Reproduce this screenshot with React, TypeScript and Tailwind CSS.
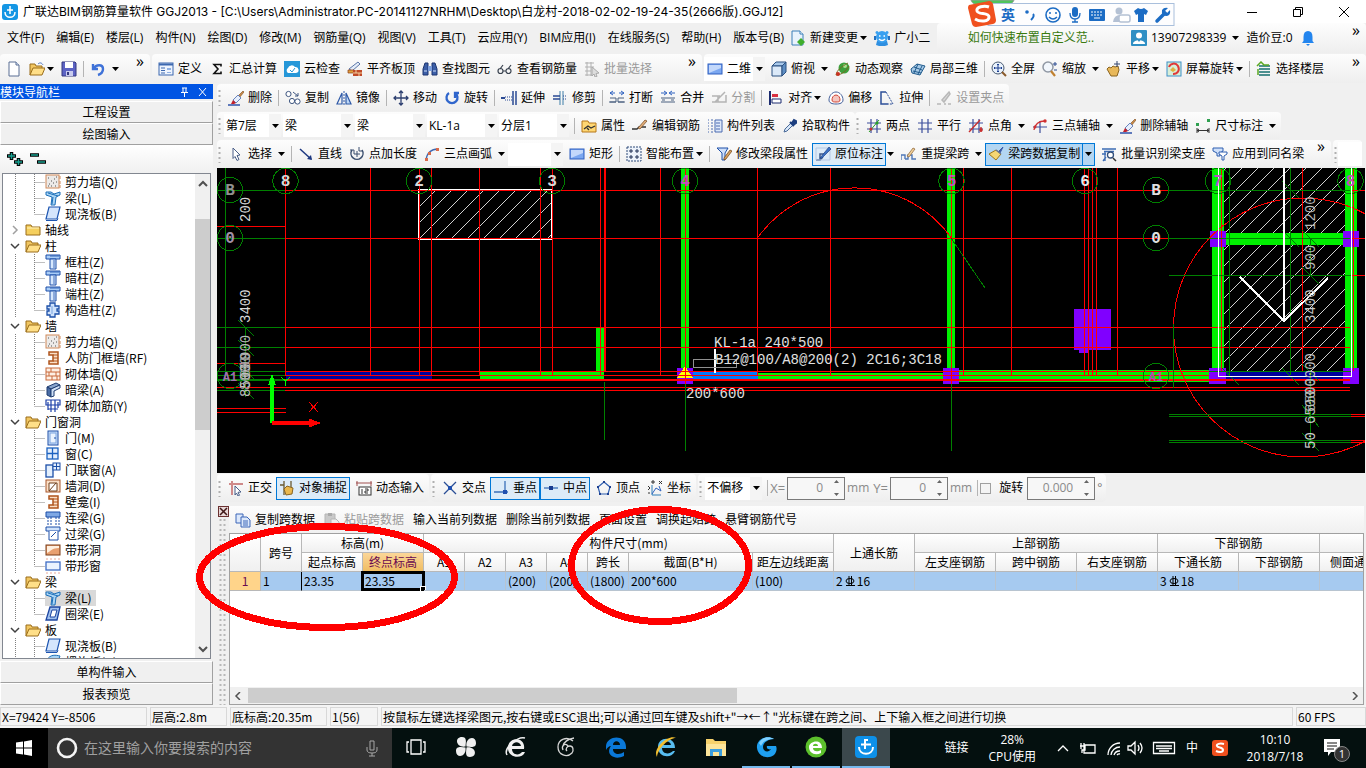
import React from 'react';

// ---------- icon drawings, all on a 16x16 grid ----------

const blueRect = (
  <>
    <rect x="1" y="3" width="14" height="10" fill="#7ba7f0" stroke="#2f5fc0" />
    <path d="M2 4h12v3l-12 5z" fill="#c3d8fb" />
  </>
);
const broom = (
  <>
    <path d="M15 1L10 6l1.500 1.500L16 2z" fill="#c98b4a" stroke="#7a4a1c" strokeWidth=".6" />
    <path d="M10 5l3 3-5 5-3-3z" fill="#e6eefc" stroke="#4668b0" strokeWidth=".8" />
    <path d="M5 10l3 3-2 1H3z" fill="#c2202a" />
    <path d="M0 15h12" stroke="#2c50a8" strokeWidth="1.500" />
  </>
);
const column = (
  <>
    <path d="M1 1h14v4H1z" fill="#a9cdf7" stroke="#1c4fa8" />
    <path d="M5 5h6v10H5z" fill="#d7e8fd" stroke="#1c4fa8" />
    <path d="M5 2h9M9 6v8" stroke="#1c4fa8" strokeWidth=".8" />
  </>
);
const niche = (
  <>
    <path d="M4 2h9v12H4v-3h4V5H4z" fill="#fbe0c8" stroke="#b0541c" strokeWidth="1.500" />
    <path d="M8 5h5M8 8h5M8 11h5" stroke="#b0541c" />
  </>
);
const dottedWall = (
  <>
    <rect x="1" y="1" width="13" height="13" fill="#eceae8" stroke="#d08a5a" />
    <path d="M3 4h1M6 7h1M9 5h1M4 10h1M8 9h1M11 8h1M6 12h1M10 12h1M3 12h1M11 3h1" stroke="#555" />
    <path d="M15 2v3M15 7v3M15 11v3" stroke="#d08a5a" />
  </>
);
const slab = (
  <>
    <path d="M4 1h11l-3 12H1z" fill="#d4e5fc" stroke="#1d55b0" strokeWidth="1.200" />
    <path d="M1 14.500h11l1-2" fill="none" stroke="#1d55b0" />
  </>
);
const beam = (
  <>
    <path d="M1 2h5l3 2 6-2v3l-4 2-1 8H6l1-8-6-2z" fill="#a8d4f5" stroke="#1d6fb8" />
    <path d="M3 3l10 3M8 7l-1 7" stroke="#1d6fb8" />
  </>
);
const axisGrid = <path d="M1 5h14M1 11h14M5 1v14M11 1v14" stroke="#3c4f9c" strokeWidth="1.200" fill="none" />;

const ICONS: Record<string, React.ReactNode> = {
  newFile: (
    <>
      <path d="M3 1h7l3 3v11H3z" fill="#fff" stroke="#5a6f94" />
      <path d="M10 1v3h3" fill="#dbe6f8" stroke="#5a6f94" />
    </>
  ),
  open: (
    <>
      <path d="M1 14V3h5l1 2h6v3" fill="#f1c661" stroke="#9a6d1a" />
      <path d="M1 14L4 7h12l-3 7z" fill="#ffdf88" stroke="#9a6d1a" />
      <path d="M9 3c2-2 4-1 5 1" stroke="#4c77c0" fill="none" />
    </>
  ),
  folderOpen: (
    <>
      <path d="M1 14V3h5l1 2h6v3" fill="#f1c661" stroke="#9a6d1a" />
      <path d="M1 14L4 7h12l-3 7z" fill="#ffdf88" stroke="#9a6d1a" />
    </>
  ),
  folder: (
    <>
      <path d="M1 13V3h5l1 2h8v8z" fill="#f5cf5e" stroke="#9a6d1a" />
      <path d="M2 6h12" stroke="#fff3c0" />
    </>
  ),
  save: (
    <>
      <path d="M1 1h13l1 1v13H1z" fill="#5c63c4" stroke="#34397e" />
      <path d="M4 1h8v6H4z" fill="#fff" />
      <path d="M5 10h7v5H5z" fill="#c8cbee" />
      <path d="M6 11h2v3H6z" fill="#34397e" />
    </>
  ),
  undo: <path d="M3 3v5h5M3.500 8C6 3 13 3 13 8c0 3-2 5-5 6" fill="none" stroke="#3f72d8" strokeWidth="2.400" />,
  define: (
    <>
      <rect x="1" y="2" width="14" height="12" fill="#eef4fd" stroke="#3c68b0" />
      <path d="M1 3.500h14" stroke="#3c68b0" strokeWidth="2" />
      <path d="M3 7h4M3 9.500h4M3 12h4" stroke="#3c68b0" />
      <path d="M9 7h4v2H9zM9 11h4v1H9z" fill="#8fb0e4" />
    </>
  ),
  sigma: <path d="M12 5.500V3.500H5L9 8l-4 4.500h7v-2" fill="none" stroke="#111" strokeWidth="1.600" />,
  cloud: (
    <>
      <rect width="16" height="16" fill="#2697d8" />
      <path d="M4 12a3 3 0 010-5 4 4 0 017-1 3 3 0 011 6z" fill="#fff" />
      <path d="M6 9l2 2 3-4" stroke="#2697d8" fill="none" />
    </>
  ),
  alignTop: (
    <>
      <path d="M2 8l9-7 2 2-8 7z" fill="#e4ecf8" stroke="#5a76a8" />
      <path d="M1 9h6v3H1z" fill="#e0a040" stroke="#8a3a12" strokeWidth=".7" />
      <path d="M6 9h9v6H6z" fill="#c04a28" />
      <path d="M6 12h9M9 9v3M12 12v3" stroke="#f2d0a0" />
    </>
  ),
  binoculars: (
    <>
      <path d="M1 14V8l2-6h3v12zM10 14V2h3l2 6v6z" fill="#3c5fa8" stroke="#1d356e" />
      <path d="M6 5h4v5H6z" fill="#7fa0dc" />
      <path d="M2 10h3M11 10h3" stroke="#cfe0fa" />
    </>
  ),
  glasses: <path d="M3 8l3-4M11 8l3-4M1 10a2.500 2.500 0 105 0 2.500 2.500 0 10-5 0M9 10a2.500 2.500 0 105 0 2.500 2.500 0 10-5 0M6 10h3" fill="none" stroke="#39424f" strokeWidth="1.200" />,
  batch: (
    <>
      <path d="M1 2h9M1 6h9M1 10h6M1 14h7M3 1v14M7 1v14" stroke="#b0b0b0" fill="none" />
      <path d="M8 6l7 6-3 .5 1 3-2 .5-1-3-2 2z" fill="#ddd" stroke="#aaa" />
    </>
  ),
  rect: blueRect,
  cube: (
    <>
      <path d="M1 5l4-4h10l-4 4z" fill="#a8c8ea" stroke="#2a5080" />
      <path d="M1 5h10v10H1z" fill="#dbe9f8" stroke="#2a5080" />
      <path d="M11 5l4-4v10l-4 4z" fill="#5f8fc4" stroke="#2a5080" />
    </>
  ),
  orbit: (
    <>
      <circle cx="9" cy="7" r="5.500" fill="#3ca03c" />
      <circle cx="10" cy="5" r="2" fill="#a8e090" />
      <path d="M1 14c1-5 5-8 12-12M1 14c4 0 9-2 13-9" stroke="#7a6a20" fill="none" />
      <circle cx="3" cy="13" r="2" fill="#c83020" />
    </>
  ),
  local3d: (
    <>
      <path d="M1 8l6-5 8 2-5 9-8-2z" fill="#a9cbe8" stroke="#1f5a8c" />
      <path d="M4 6l8 3M3 10l8 2M8 3L4 12M12 5l-4 8" stroke="#1f5a8c" />
    </>
  ),
  fullscreen: (
    <>
      <circle cx="7" cy="7" r="6" fill="#e9f2fc" stroke="#4a5a70" />
      <path d="M7 3v8M3 7h8M6 4l1-1 1 1M6 10l1 1 1-1M4 6L3 7l1 1M10 6l1 1-1 1" stroke="#1c3e90" fill="none" />
      <path d="M11 11l4 4" stroke="#8a5a2a" strokeWidth="2" />
    </>
  ),
  zoom: (
    <>
      <circle cx="6" cy="6" r="5" fill="#f2f7fd" stroke="#9098a4" strokeWidth="1.500" />
      <path d="M9 10l4 5" stroke="#c08030" strokeWidth="2.200" />
      <path d="M11 3h4M13 1v4M12 9h3" stroke="#2a4a90" />
    </>
  ),
  pan: (
    <>
      <path d="M1 8l2-2 2 1 2-2 2 1 3-1 1 4-2 6H5z" fill="#e8b85a" stroke="#8a6420" />
      <path d="M11 0v6M8 3h6" stroke="#33456e" />
    </>
  ),
  rotateScreen: (
    <>
      <rect x="1" y="1" width="14" height="14" fill="#d8eed8" stroke="#3c90c8" />
      <path d="M3 6a5 5 0 019-1c2 4 0 8-5 8" fill="none" stroke="#e03838" strokeWidth="2" />
      <path d="M4 9l3-3 3 3-3 2z" fill="#e0b040" />
    </>
  ),
  floors: (
    <>
      <path d="M3 5h11M3 8h11M3 11h11M3 14h11" stroke="#167070" strokeWidth="1.500" />
      <path d="M1 5l4-4 3 3h5M2 8v6" stroke="#5aa820" fill="none" strokeWidth="1.500" />
    </>
  ),
  broom,
  copy: (
    <>
      <circle cx="3.500" cy="4" r="2.600" fill="#fff" stroke="#3f5680" />
      <circle cx="7" cy="11" r="2.600" fill="#fff" stroke="#3f5680" />
      <circle cx="12.500" cy="11.500" r="2.600" fill="#fff" stroke="#3f5680" />
      <path d="M8 2l5 4M13 3v3h-3" stroke="#3f5680" fill="none" />
    </>
  ),
  mirror: (
    <>
      <path d="M6 3v11H1z" fill="none" stroke="#2f5aa8" strokeWidth="1.200" />
      <path d="M10 3v11h5z" fill="#bcd6f6" stroke="#2f5aa8" strokeWidth="1.200" />
      <path d="M8 1v14" stroke="#2f5aa8" strokeDasharray="2 1" />
    </>
  ),
  move: <path d="M8 1v14M1 8h14M6 3l2-2 2 2M6 13l2 2 2-2M3 6L1 8l2 2M13 6l2 2-2 2" fill="none" stroke="#2d3f70" strokeWidth="1.300" />,
  rotate: <path d="M5 3a5.500 5.500 0 106 0M11 8V3h4" fill="none" stroke="#3066cc" strokeWidth="2.300" />,
  extend: (
    <>
      <path d="M12 1v14M15 1v14" stroke="#2a4a94" strokeWidth="1.500" />
      <path d="M0 8h4" stroke="#2a4a94" strokeWidth="2" />
      <path d="M4 7h7M4 10h7" stroke="#2a4a94" strokeDasharray="1 1" />
    </>
  ),
  trim: (
    <>
      <path d="M8 1v14M11 1v14" stroke="#3f7fa8" />
      <path d="M1 6h7M1 9h7" stroke="#2a4a94" strokeWidth="1.300" />
      <path d="M11 6h4M11 9h4" stroke="#2a4a94" strokeDasharray="1 1" />
    </>
  ),
  breakIt: (
    <>
      <path d="M1 3h5M10 3h5M4 1l-3 2 3 2M12 1l3 2-3 2" stroke="#2f62c0" fill="none" />
      <path d="M1 8h6v4H1M15 8H9v4h6M0 12h7M9 12h7" stroke="#4a6080" fill="none" />
    </>
  ),
  merge: (
    <>
      <path d="M1 3h5M10 3h5M4 1l3 2-3 2M12 1L9 3l3 2" stroke="#2f62c0" fill="none" />
      <path d="M1 8h14M1 12h14M2 10h3M11 10h3" stroke="#4a6080" fill="none" />
    </>
  ),
  split: <path d="M1 6h8M1 12h14v-7M4 12L14 2M7 6v6" stroke="#b4b4b4" strokeWidth="1.500" fill="none" />,
  align: (
    <>
      <path d="M2 1v14" stroke="#1c2c70" strokeWidth="2" />
      <path d="M4 4h6v3H4z" fill="#d83040" />
      <path d="M4 9h9v4H4z" fill="#fff" stroke="#1c2c70" />
    </>
  ),
  offset: (
    <>
      <path d="M8 2c4 0 7 4 7 8 0 3-3 4-7 4s-7-1-7-4c0-4 3-8 7-8z" fill="#fff" stroke="#44609a" />
      <path d="M8 5c3 0 4 3 4 5s-2 2-4 2-4 0-4-2 1-5 4-5z" fill="#f3c6c0" stroke="#d04434" />
    </>
  ),
  stretch: (
    <>
      <path d="M9 14H2V2h5" fill="none" stroke="#2d4f98" strokeWidth="1.500" />
      <path d="M7 2l7 12H9" fill="none" stroke="#2d4f98" strokeDasharray="2 1" />
    </>
  ),
  grip: <path d="M1 14h4M8 14h2M12 14h3M6 10l7-8 1 2-6 8z" stroke="#b8b8b8" strokeWidth="1.500" fill="#ddd" />,
  props: (
    <>
      <path d="M1 3h6l1 2h7v9H1z" fill="#ffd773" stroke="#b5761a" />
      <path d="M3 11l4-3 3 2 4-2M6 10l2 2" stroke="#333" fill="none" strokeWidth="1.300" />
    </>
  ),
  editBar: (
    <>
      <path d="M0 11h5l2-2h7" stroke="#333" strokeWidth="1.300" fill="none" />
      <path d="M6 10L13 2l2 1-7 8z" fill="#e4b07a" stroke="#70431c" strokeWidth=".7" />
    </>
  ),
  list: (
    <>
      <path d="M1 2h1M1 5h1M1 8h1M1 11h1M1 14h1M4 2h2M4 5h2M4 8h2M4 11h2M4 14h2" stroke="#4a6ab0" />
      <path d="M8 2h7v12H8z" fill="#dfe9fa" stroke="#4a6ab0" />
      <path d="M9 5h4M9 8h4M9 11h4" stroke="#4a6ab0" />
    </>
  ),
  pick: (
    <>
      <path d="M2 14l1-3 6-6 2 2-6 6z" fill="#d8e8fa" stroke="#4a6a98" />
      <path d="M8 4l4 4M10 5l2-3 2 1v2l-3 2z" stroke="#1d3f80" strokeWidth="2" fill="#1d3f80" />
    </>
  ),
  twoPoint: (
    <>
      {axisGrid}
      <path d="M3 14L13 2" stroke="#28a028" />
      <circle cx="5" cy="11" r="1.600" fill="#c03030" />
      <circle cx="11" cy="5" r="1.600" fill="#28a028" />
    </>
  ),
  parallel: axisGrid,
  pointAngle: (
    <>
      {axisGrid}
      <path d="M1 14L12 2M13 9v5" stroke="#c83030" strokeWidth="1.400" />
      <circle cx="13" cy="12" r="1.800" fill="#c83030" />
    </>
  ),
  threeAxis: (
    <>
      <path d="M1 9h14M8 3v12" stroke="#3c4f9c" strokeWidth="1.200" />
      <path d="M2 12C3 6 7 3 13 3" stroke="#d03030" fill="none" strokeWidth="1.300" />
      <circle cx="13" cy="3" r="1.700" fill="#d03030" />
      <circle cx="3" cy="9" r="1.500" fill="#d03030" />
    </>
  ),
  dimension: (
    <>
      <path d="M2 10v5M14 10v5M2 12.500h12M4 11l-2 1.500L4 14M12 11l2 1.500-2 1.500" stroke="#333" fill="none" />
      <path d="M1 5h3v3H1zM12 1h3v3h-3z" fill="#2fa050" />
    </>
  ),
  pointer: <path d="M5 2l7 7-3 .5 2 4-2 1-2-4-2 2z" fill="#fff" stroke="#4a5f88" />,
  line: (
    <>
      <path d="M2 3l11 10" stroke="#1c3780" strokeWidth="1.500" />
      <path d="M14 14l-5-1 4-4z" fill="#1c3780" />
    </>
  ),
  pointLen: (
    <>
      <path d="M3 4a6 6 0 1010 0" fill="none" stroke="#3c5070" strokeWidth="1.500" />
      <path d="M8 5v6M5 8h6M1 4h4v4M10 1v4h4" stroke="#3c5070" fill="none" />
    </>
  ),
  arc: (
    <>
      <path d="M2 14C3 7 7 3 14 3" fill="none" stroke="#3d67b0" strokeWidth="1.300" />
      <path d="M12 2h3v3h-3zM4 6h3v3H4zM1 12h3v3H1z" fill="#d86a4a" />
    </>
  ),
  smart: (
    <>
      <rect x="1" y="1" width="14" height="14" fill="#edf3fb" stroke="#2f4a78" strokeDasharray="2 1" />
      <path d="M5 3v4M3 5h4M11 3v4M9 5h4M5 9v4M3 11h4M11 9v4M9 11h4" stroke="#1e2f54" />
    </>
  ),
  modifySeg: (
    <>
      <path d="M1 2h11L9 7v7H6V7z" fill="#cfe0fa" stroke="#1c4fa8" />
      <path d="M8 12l6-8 2 1-6 8-2 1z" fill="#d9a260" stroke="#6a3d10" strokeWidth=".7" />
    </>
  ),
  inSitu: (
    <>
      <path d="M1 14h4V8h4M5 14l3-3" stroke="#3d5a8c" fill="none" strokeWidth="1.500" />
      <path d="M1 2h14v12H1z" fill="none" stroke="#b4c8e4" />
      <path d="M5 12L14 1l2 2-9 9z" fill="#3a71c4" stroke="#1f4486" strokeWidth=".7" />
    </>
  ),
  respan: (
    <>
      <path d="M0 14v-5h4v4M4 13h3V9h4v4h4" stroke="#4f78b8" fill="none" strokeWidth="1.400" />
      <path d="M6 10l6-8 2 1-6 8z" fill="#f0d09a" stroke="#8a6030" strokeWidth=".7" />
    </>
  ),
  brush: (
    <>
      <path d="M15 1l-5 5 2 1z" fill="#3c5ca8" stroke="#3c5ca8" />
      <path d="M8 4l5 4-5 6-7-6z" fill="#f5d774" stroke="#a07818" />
      <path d="M8 4l5 4" stroke="#687898" strokeWidth="1.500" />
    </>
  ),
  recognise: (
    <>
      <path d="M1 3h14M3 5.500h10M1 8h4M4 6v9M2 15l3-4" stroke="#3c6cb4" fill="none" strokeWidth="1.300" />
      <circle cx="9.500" cy="9" r="3" fill="#fff" stroke="#33507c" strokeWidth="1.300" />
      <path d="M12 12l3 3" stroke="#333" strokeWidth="1.500" />
    </>
  ),
  applySame: (
    <>
      <path d="M1 2h10v3L8 7v3H5V7L1 5z" fill="#cfe0fa" stroke="#2f5fb0" />
      <path d="M7 6h8v2l-3 2v4h-2v-4l-3-2z" fill="#fff" stroke="#2f5fb0" />
    </>
  ),
  ortho: (
    <>
      <path d="M1 4h14M4 1v14" stroke="#cf8a8a" strokeWidth="2" />
      <path d="M7 6l6 6-3 .3 1.500 3-1.500.7-1.500-3-1.500 2z" fill="#fff" stroke="#4a5f88" />
    </>
  ),
  osnap: (
    <>
      <path d="M5 1v14M1 5h4M12 1v6" stroke="#6a5a30" strokeWidth="1.300" />
      <path d="M5 9l3-3 6 2-1 6-6 1z" fill="#eab84e" stroke="#8a6420" />
    </>
  ),
  dynInput: (
    <>
      <path d="M0 3h16M1 1v5M15 1v5" stroke="#a05050" />
      <rect x="3" y="7" width="12" height="8" fill="#fff" stroke="#333" />
      <path d="M6 9v5M9 9h3v2H9v2h3" stroke="#333" fill="none" />
    </>
  ),
  cross: (
    <>
      <path d="M2 2l12 12M14 2L2 14" stroke="#2a4e96" strokeWidth="1.300" />
      <path d="M6 6h4v4H6z" fill="#2050b0" />
    </>
  ),
  perp: (
    <>
      <path d="M12 1v12M1 12h14" stroke="#3a70b8" strokeWidth="1.300" />
      <path d="M10 10h4v4h-4z" fill="#2050b0" />
    </>
  ),
  mid: (
    <>
      <path d="M1 8h14" stroke="#3a70b8" strokeWidth="1.300" />
      <path d="M6 6h4v4H6z" fill="#1a3c90" />
    </>
  ),
  vertex: (
    <>
      <path d="M8 2l6 5-2 7H4L2 7z" fill="none" stroke="#2f5fb0" strokeWidth="1.200" />
      <path d="M7 1h2v2H7zM13 6h2v2h-2zM1 6h2v2H1zM3 13h2v2H3zM11 13h2v2h-2z" fill="#1d3f90" />
    </>
  ),
  coord: (
    <>
      <path d="M5 5v10h9" stroke="#2f7fb8" fill="none" />
      <path d="M5 14l4-6 5 3M12 6l2 5" stroke="#2f62c0" fill="none" />
      <path d="M1 6l2 2M1 10l2-2M5 1h2v2H5zM12 1l3 3M15 1l-3 3M1 13h2" stroke="#333" fill="none" />
    </>
  ),
  docs: (
    <>
      <path d="M1 2h7v9H1z" fill="#dce8fb" stroke="#3c66b8" />
      <path d="M6 5h6l3 3v7H6z" fill="#dce8fb" stroke="#3c66b8" />
      <path d="M8 9h5M8 11h5M8 13h5" stroke="#3c66b8" />
    </>
  ),
  paste: (
    <>
      <path d="M1 2h10v12H1z" fill="#c9c9c9" stroke="#b5b5b5" />
      <path d="M4 1h4v3H4z" fill="#aaa" />
      <path d="M7 7h5l3 3v5H7z" fill="#eee" stroke="#b5b5b5" />
    </>
  ),
  newChange: (
    <>
      <path d="M2 1h8l3 3v11H2z" fill="#e8f2fc" stroke="#3a7fb8" />
      <path d="M10 1v3h3" fill="#fff" stroke="#3a7fb8" />
      <path d="M11 8l4 4-4 4-4-4z" fill="#3fae2c" />
    </>
  ),
  robot: (
    <>
      <path d="M3 11h10l1 4-3 1H5l-3-1z" fill="#2f8fe0" />
      <circle cx="8" cy="7" r="6" fill="#39a0f0" />
      <circle cx="3" cy="2.500" r="1.500" fill="#39a0f0" />
      <circle cx="13" cy="2.500" r="1.500" fill="#39a0f0" />
      <path d="M5 6h1.500M9.500 6H11M5 9c2 2 4 2 6 0" stroke="#fff" strokeWidth="1.500" fill="none" />
      <path d="M0 6h2v4H0zM14 6h2v4h-2z" fill="#2470c0" />
    </>
  ),
  user: (
    <>
      <rect width="16" height="16" rx="1" fill="#2f8fc4" />
      <circle cx="8" cy="5.500" r="3" fill="#fff" />
      <path d="M2 14c0-5 12-5 12 0z" fill="#fff" />
      <path d="M6 9l2 3 2-3" fill="#2f8fc4" />
    </>
  ),
  bell: <path d="M8 1c3 0 4.500 2 4.500 6v4l1.500 2H2l1.500-2V7c0-4 1.500-6 4.500-6zM6 14h4l-2 2z" fill="#2385ee" />,
  dottedWall,
  beam,
  slab,
  column,
  gear: (
    <>
      <path d="M5 1h5v3h4v3h-2v2h2v3h-4v3H5v-2H2V9h2V7H2V4h3z" fill="#cfe2fb" stroke="#1c4fa8" strokeWidth="1.300" />
      <path d="M7 4v8" stroke="#7aa4e0" />
    </>
  ),
  niche,
  brick: (
    <>
      <rect x="1" y="2" width="14" height="12" fill="#fdf0e4" stroke="#c8693a" />
      <path d="M1 6h14M1 10h14M6 2v4M11 6v4M4 6v4M7 10v4M12 10v4" stroke="#c8693a" />
    </>
  ),
  darkBeam: (
    <>
      <path d="M2 5l9-4 4 2-9 4z" fill="#88a4cc" stroke="#1f3c70" />
      <path d="M2 5l4 2v8l-4-2z" fill="#4a6da6" stroke="#1f3c70" />
      <path d="M6 7l9-4v3l-6 3v5l-3 1z" fill="#cfe0f6" stroke="#1f3c70" />
    </>
  ),
  rebar: <path d="M1 2h14v5H1zM3 4v8M6 2v12M10 2v12M13 4v6M3 11h10" fill="none" stroke="#1c3fa8" strokeWidth="1.200" />,
  door: (
    <>
      <rect x="3" y="1" width="10" height="14" fill="#cfe2fb" stroke="#1c4fa8" />
      <rect x="5" y="3" width="6" height="10" fill="#eaf3fe" stroke="#7aa4e0" />
      <path d="M9 8h2" stroke="#1c4fa8" />
    </>
  ),
  window: (
    <>
      <rect x="2" y="2" width="11" height="11" fill="#e3effd" stroke="#1c62c0" strokeWidth="1.300" />
      <path d="M7.500 2v11M2 7.500h11" stroke="#1c62c0" strokeWidth="1.300" />
    </>
  ),
  doorWindow: (
    <>
      <rect x="1" y="3" width="7" height="12" fill="#e3effd" stroke="#1c4fa8" strokeWidth="1.300" />
      <rect x="8" y="1" width="7" height="7" fill="#e3effd" stroke="#1c4fa8" />
      <path d="M11.500 1v7M8 4.500h7" stroke="#1c4fa8" />
    </>
  ),
  hole: (
    <>
      <rect x="1" y="2" width="14" height="12" fill="#fbe0c8" stroke="#a8562a" />
      <path d="M4 5h8v8H4zM4 13l7-8" stroke="#70401c" fill="#fff" />
    </>
  ),
  linkBeam: (
    <>
      <path d="M1 2h14v5H1z" fill="#7fa8e4" stroke="#1c4fa8" />
      <path d="M3 7v8M6 7v8M11 7v8M14 7v8" stroke="#1c4fa8" strokeDasharray="2 1" />
    </>
  ),
  lintel: (
    <>
      <path d="M1 1h14v4H1z" fill="#cfe2fb" stroke="#1c4fa8" />
      <path d="M4 5v9h9V5M6 11l5-5" fill="#fff" stroke="#1c4fa8" />
    </>
  ),
  stripHole: (
    <>
      <rect x="1" y="3" width="14" height="10" fill="#e8a070" stroke="#7a3c18" />
      <path d="M2 11c4-2 5-5 12-5V4H2z" fill="#fff0e0" />
    </>
  ),
  stripWindow: (
    <>
      <rect x="1" y="4" width="14" height="8" fill="#eaf3fe" stroke="#3c6cc4" strokeWidth="1.300" />
      <path d="M1 1h14M1 15h14" stroke="#e8a898" strokeDasharray="2 2" />
    </>
  ),
  ringBeam: (
    <>
      <path d="M5 1h10l-3 13H1z" fill="#9fc0ee" stroke="#1d45a0" strokeWidth="1.300" />
      <path d="M7 4h5l-2 7H5z" fill="#fff" stroke="#1d45a0" />
    </>
  ),
  spiral: <path d="M2 6c3-6 9-5 13-4l-2 5c-4-2-6 0-8 4z" fill="#a8d4f5" stroke="#1d6fb8" />,
};

const Icon = ({ name }: { name: string }) => (
  <svg viewBox="0 0 16 16" className="h-4 w-4 shrink-0" aria-hidden="true">
    {ICONS[name]}
  </svg>
);

const Caret = ({ className = '' }: { className?: string }) => (
  <svg viewBox="0 0 7 4" className={`h-1 w-[7px] shrink-0 ${className}`} aria-hidden="true">
    <path d="M0 0h7L3.500 4z" fill="#000" />
  </svg>
);

// ---------- toolbar building blocks ----------

interface ToolProps {
  icon?: string;
  label?: string;
  caret?: boolean | 'tight';
  disabled?: boolean;
}

const Tool = ({ icon, label, caret, disabled }: ToolProps) => (
  <button
    type="button"
    disabled={disabled}
    aria-label={label ? undefined : icon}
    className="flex h-6 shrink-0 items-center gap-1 whitespace-nowrap pl-1.5 pr-px disabled:text-[#9a9a9a]"
  >
    {icon && <Icon name={icon} />}
    {label}
    {caret && <Caret className={caret === 'tight' ? '-ml-0.5' : 'ml-0.5'} />}
  </button>
);

const ActiveTool = ({ icon, label }: { icon: string; label: string }) => (
  <button
    type="button"
    aria-pressed="true"
    className="flex h-[23px] shrink-0 items-center gap-1 whitespace-nowrap border border-[#0078d7] bg-[#dcebf8] px-0.5"
  >
    <Icon name={icon} />
    {label}
  </button>
);

const Sep = () => <span className="ml-[5px] h-4 w-px shrink-0 bg-[#b4b4b4]" />;

const Grip = () => (
  <svg viewBox="0 0 3 17" className="mx-px h-[17px] w-[3px] shrink-0" aria-hidden="true">
    <path d="M1.500 1v16" stroke="#b0b0b0" strokeWidth="2" strokeDasharray="2 3" />
  </svg>
);

const More = () => <span className="mb-4 mr-1.5 ml-auto block text-base leading-3">»</span>;

const Combo = ({ label, value, width }: { label: string; value: string; width: string }) => (
  <span className={`relative ml-0.5 flex h-[23px] shrink-0 items-center bg-white ${width}`}>
    <select aria-label={label} defaultValue={value} className="h-full w-full appearance-none bg-transparent pl-0.5 outline-none">
      <option>{value}</option>
    </select>
    <span className="pointer-events-none absolute inset-y-0 right-0 flex w-3 items-center justify-center bg-[#f4f4f4]">
      <Caret />
    </span>
  </span>
);

const Spin = ({ label, value, width }: { label: string; value: string; width: string }) => (
  <span className={`mx-0.5 flex h-[23px] shrink-0 items-center border border-[#7a7a7a] bg-[#f7f7f7] pr-1 ${width}`}>
    <input aria-label={label} defaultValue={value} className="w-full min-w-0 bg-transparent pr-2.5 text-right text-[#8a8a8a] outline-none" />
    <svg viewBox="0 0 7 16" className="h-4 w-[7px] shrink-0" aria-hidden="true">
      <path d="M1 3h5L3.500 0zM1 13h5l-2.500 3z" fill="#666" />
    </svg>
  </span>
);

const Bar = ({ children, className = '' }: { children: React.ReactNode; className?: string }) => (
  <div className={`flex items-center rounded-sm bg-linear-to-b from-[#fdfdfd] to-[#eeeeee] ${className}`}>{children}</div>
);

// ---------- data ----------

const MENUS = [
  '文件(F)', '编辑(E)', '楼层(L)', '构件(N)', '绘图(D)', '修改(M)', '钢筋量(Q)', '视图(V)', '工具(T)',
  '云应用(Y)', 'BIM应用(I)', '在线服务(S)', '帮助(H)', '版本号(B)',
];

interface TreeRow {
  text: string;
  icon?: string;
  closed?: boolean;
  last?: boolean;
  selected?: boolean;
}

// rows without an icon are folders
const TREE: TreeRow[] = [
  { text: '剪力墙(Q)', icon: 'dottedWall' },
  { text: '梁(L)', icon: 'beam' },
  { text: '现浇板(B)', icon: 'slab', last: true },
  { text: '轴线', closed: true },
  { text: '柱' },
  { text: '框柱(Z)', icon: 'column' },
  { text: '暗柱(Z)', icon: 'column' },
  { text: '端柱(Z)', icon: 'column' },
  { text: '构造柱(Z)', icon: 'gear', last: true },
  { text: '墙' },
  { text: '剪力墙(Q)', icon: 'dottedWall' },
  { text: '人防门框墙(RF)', icon: 'niche' },
  { text: '砌体墙(Q)', icon: 'brick' },
  { text: '暗梁(A)', icon: 'darkBeam' },
  { text: '砌体加筋(Y)', icon: 'rebar', last: true },
  { text: '门窗洞' },
  { text: '门(M)', icon: 'door' },
  { text: '窗(C)', icon: 'window' },
  { text: '门联窗(A)', icon: 'doorWindow' },
  { text: '墙洞(D)', icon: 'hole' },
  { text: '壁龛(I)', icon: 'niche' },
  { text: '连梁(G)', icon: 'linkBeam' },
  { text: '过梁(G)', icon: 'lintel' },
  { text: '带形洞', icon: 'stripHole' },
  { text: '带形窗', icon: 'stripWindow', last: true },
  { text: '梁' },
  { text: '梁(L)', icon: 'beam', selected: true },
  { text: '圈梁(E)', icon: 'ringBeam', last: true },
  { text: '板' },
  { text: '现浇板(B)', icon: 'slab' },
  { text: '螺旋板(B)', icon: 'spiral' },
];

// ---------- window parts ----------

const ImeBar = () => (
  <div className="absolute left-[968px] top-0 z-10 h-7 w-[208px]">
    <svg viewBox="0 0 208 28" className="h-full w-full" aria-hidden="true">
      <path d="M3 0h43c-1 4-6 5-10 5H12C8 5 4 4 3 0z" fill="#4fc45c" stroke="#9a9a9a" />
      <rect x="20" y="3.500" width="186" height="22" fill="#fdfdfe" stroke="#a9bfdc" />
      <path d="M1 5l20-4q3 0 4 3l3 16q0 3-3 4L8 27q-3 0-4-3L0 8q0-2 1-3z" fill="#f0501e" />
      <path d="M21 7c-5-2-13 0-12 4s12 1 12 6-9 5-14 2" fill="none" stroke="#fff" strokeWidth="3" />
      <text x="33" y="20" fontSize="14" fontWeight="700" fill="#1c6cc4" className="font-['Noto_Sans_CJK_SC',sans-serif]">英</text>
      <circle cx="59" cy="12" r="1.800" fill="#1c6cc4" />
      <path d="M65 14q2 2-2 6" stroke="#1c6cc4" strokeWidth="2" fill="none" />
      <circle cx="85" cy="15" r="7" fill="none" stroke="#1c6cc4" strokeWidth="1.600" />
      <path d="M82 12v2M88 12v2M81 17q4 4 8 0" stroke="#1c6cc4" strokeWidth="1.500" fill="none" />
      <rect x="104" y="7" width="6" height="10" rx="3" fill="#1c6cc4" />
      <path d="M102 13q0 6 5 6t5-6M107 19v3M104 22h6" stroke="#1c6cc4" strokeWidth="1.300" fill="none" />
      <rect x="121" y="9" width="16" height="12" rx="1" fill="#1c6cc4" />
      <path d="M123 12h12M123 15h12" stroke="#fff" strokeDasharray="2 1" />
      <path d="M126 18h6" stroke="#fff" />
      <circle cx="151" cy="11" r="3.500" fill="#b4c1d4" />
      <path d="M145 22q1-7 7-7v7z" fill="#b4c1d4" />
      <rect x="151" y="15" width="11" height="7" rx="2" fill="#fff" stroke="#b4c1d4" strokeWidth="1.500" />
      <path d="M166 11l4-3q3 2 6 0l4 3-2 4-2-1v8h-6v-8l-2 1z" fill="#1c6cc4" />
      <path d="M189 21l8-8" stroke="#1c6cc4" strokeWidth="3.500" strokeLinecap="round" />
      <path d="M200 8l-3 3 2 2 3-3q1 5-3 6-6 0-5-6 2-3 6-2z" fill="#1c6cc4" />
    </svg>
  </div>
);

const TitleBar = () => (
  <header className="flex h-[23px] shrink-0 items-center bg-white">
    <svg viewBox="0 0 16 16" className="ml-0.5 h-4 w-4" aria-hidden="true">
      <rect width="16" height="16" rx="3" fill="#1496e4" />
      <path d="M8 2v8M3 8c0 7 10 7 10 0M5 6h6" stroke="#fff" strokeWidth="1.500" fill="none" />
    </svg>
    <h1 className="ml-[5px] whitespace-nowrap font-['Inter','Noto_Sans_CJK_SC',sans-serif]">广联达BIM钢筋算量软件 GGJ2013 - [C:\Users\Administrator.PC-20141127NRHM\Desktop\白龙村-2018-02-02-19-24-35(2666版).GGJ12]</h1>
    <div className="ml-auto mr-4 flex items-center gap-[34px]">
      <button type="button" aria-label="最小化">
        <svg viewBox="0 0 12 12" className="h-3 w-3"><path d="M1 6.500h10" stroke="#000" /></svg>
      </button>
      <button type="button" aria-label="还原">
        <svg viewBox="0 0 12 12" className="h-3 w-3"><path d="M1.500 3.500h7v7h-7zM3.500 3v-1.500h7v7H9" fill="none" stroke="#000" /></svg>
      </button>
      <button type="button" aria-label="关闭">
        <svg viewBox="0 0 12 12" className="h-3 w-3"><path d="M1 1l10 10M11 1L1 11" stroke="#000" /></svg>
      </button>
    </div>
  </header>
);

const MenuBar = () => (
  <nav className="flex h-[30px] shrink-0 items-center">
    <div className="flex items-center gap-3 pl-[7px]">
      {MENUS.map(m => (
        <button type="button" key={m} className="whitespace-nowrap">{m}</button>
      ))}
    </div>
    <Tool icon="newChange" label="新建变更" caret="tight" />
    <Tool icon="robot" label="广小二" />
    <Bar className="ml-auto h-full w-[188px] justify-center">
      <a href="#help" className="whitespace-nowrap text-[#3a7a10]">如何快速布置自定义范..</a>
    </Bar>
    <Bar className="h-full w-[241px]">
      <Tool icon="user" label="13907298339" caret />
      <Tool label="造价豆:0" />
      <Tool icon="bell" />
      <More />
    </Bar>
  </nav>
);

const MainTools = () => (
  <div className="flex h-[31px] shrink-0 items-center gap-0.5">
    <Bar className="h-[29px] w-[150px] shrink-0">
      <Tool icon="newFile" />
      <Tool icon="open" caret="tight" />
      <Tool icon="save" />
      <Sep />
      <Tool icon="undo" caret />
      <More />
    </Bar>
    <Bar className="h-[29px] w-[550px] shrink-0">
      <Tool icon="define" label="定义" />
      <Tool icon="sigma" label="汇总计算" />
      <Tool icon="cloud" label="云检查" />
      <Tool icon="alignTop" label="平齐板顶" />
      <Tool icon="binoculars" label="查找图元" />
      <Tool icon="glasses" label="查看钢筋量" />
      <Tool icon="batch" label="批量选择" disabled />
      <More />
    </Bar>
    <Bar className="h-[29px] min-w-0 flex-1">
      <span className="relative flex h-6 items-center gap-1 bg-white pl-[3px]">
        <Icon name="rect" />
        <select aria-label="视图维度" className="h-full w-[38px] appearance-none bg-transparent outline-none">
          <option>二维</option>
        </select>
        <span className="pointer-events-none absolute inset-y-0 right-0 flex w-3 items-center justify-center bg-[#f4f4f4]">
          <Caret />
        </span>
      </span>
      <Tool icon="cube" label="俯视" caret />
      <Tool icon="orbit" label="动态观察" />
      <Tool icon="local3d" label="局部三维" />
      <Sep />
      <Tool icon="fullscreen" label="全屏" />
      <Tool icon="zoom" label="缩放" caret />
      <Tool icon="pan" label="平移" caret="tight" />
      <Tool icon="rotateScreen" label="屏幕旋转" caret="tight" />
      <Sep />
      <Tool icon="floors" label="选择楼层" />
      <More />
    </Bar>
  </div>
);

const EditTools = () => (
  <>
    <div className="flex h-[27px] shrink-0">
      <Bar className="pr-1">
        <Grip />
        <Tool icon="broom" label="删除" />
        <Sep />
        <Tool icon="copy" label="复制" />
        <Tool icon="mirror" label="镜像" />
        <Sep />
        <Tool icon="move" label="移动" />
        <Tool icon="rotate" label="旋转" />
        <Sep />
        <Tool icon="extend" label="延伸" />
        <Tool icon="trim" label="修剪" />
        <Sep />
        <Tool icon="breakIt" label="打断" />
        <Tool icon="merge" label="合并" />
        <Tool icon="split" label="分割" disabled />
        <Sep />
        <Tool icon="align" label="对齐" caret="tight" />
        <Tool icon="offset" label="偏移" />
        <Tool icon="stretch" label="拉伸" />
        <Sep />
        <Tool icon="grip" label="设置夹点" disabled />
      </Bar>
    </div>
    <div className="flex h-[29px] shrink-0 py-px">
      <Bar className="pr-1">
        <Grip />
        <Combo label="楼层" value="第7层" width="w-[57px]" />
        <Combo label="构件类别" value="梁" width="w-[70px]" />
        <Combo label="构件类型" value="梁" width="w-[70px]" />
        <Combo label="构件名称" value="KL-1a" width="w-[70px]" />
        <Combo label="分层" value="分层1" width="w-[70px]" />
        <Sep />
        <Tool icon="props" label="属性" />
        <Tool icon="editBar" label="编辑钢筋" />
        <Tool icon="list" label="构件列表" />
        <Tool icon="pick" label="拾取构件" />
      </Bar>
      <Bar className="pr-1">
        <Grip />
        <Tool icon="twoPoint" label="两点" />
        <Tool icon="parallel" label="平行" />
        <Tool icon="pointAngle" label="点角" caret />
        <Tool icon="threeAxis" label="三点辅轴" caret />
        <Tool icon="broom" label="删除辅轴" />
        <Tool icon="dimension" label="尺寸标注" caret />
      </Bar>
    </div>
    <div className="flex h-7 shrink-0">
      <Bar className="w-[1114px]">
        <Grip />
        <Tool icon="pointer" label="选择" caret />
        <Sep />
        <Tool icon="line" label="直线" />
        <Tool icon="pointLen" label="点加长度" />
        <Tool icon="arc" label="三点画弧" caret />
        <Combo label="画弧方式" value="" width="w-[55px]" />
        <Tool icon="rect" label="矩形" />
        <Sep />
        <Tool icon="smart" label="智能布置" caret="tight" />
        <Sep />
        <Tool icon="modifySeg" label="修改梁段属性" />
        <span className="ml-[3px] flex">
          <ActiveTool icon="inSitu" label="原位标注" />
        </span>
        <Caret className="mx-px" />
        <Tool icon="respan" label="重提梁跨" caret />
        <span className="ml-0.5 flex h-[23px] shrink-0 items-center border border-[#0078d7] bg-[#b3d6f2]">
          <button type="button" aria-pressed="true" className="flex h-full items-center gap-1 whitespace-nowrap border-r border-[#0078d7] px-0.5">
            <Icon name="brush" />
            梁跨数据复制
          </button>
          <Caret className="mx-0.5" />
        </span>
        <Tool icon="recognise" label="批量识别梁支座" />
        <Tool icon="applySame" label="应用到同名梁" />
        <More />
      </Bar>
      <Bar className="ml-0.5">
        <Grip />
        <span className="h-6 w-6 bg-white" />
      </Bar>
    </div>
  </>
);

const TreeItem = ({ row }: { row: TreeRow }) =>
  row.icon ? (
    <li className="flex h-4 items-center whitespace-nowrap">
      <svg viewBox="0 0 42 16" className="h-4 w-[42px] shrink-0" aria-hidden="true">
        <path d={row.last ? 'M12.500 0v16M31.500 0v8M31.500 8.500h11' : 'M12.500 0v16M31.500 0v16M31.500 8.500h11'} stroke="#808080" strokeDasharray="1 1" fill="none" />
      </svg>
      <span className={`flex h-4 items-center gap-1 pr-1 ${row.selected ? 'bg-[#d9d9d9]' : ''}`}>
        <Icon name={row.icon} />
        {row.text}
      </span>
    </li>
  ) : (
    <li className="flex h-4 items-center gap-1 whitespace-nowrap pl-1.5">
      <svg viewBox="0 0 12 12" className="h-3 w-3 shrink-0" aria-hidden="true">
        <path d={row.closed ? 'M4 2l4 4-4 4' : 'M2 4l4 4 4-4'} fill="none" stroke={row.closed ? '#a0a0a0' : '#404040'} strokeWidth="1.500" />
      </svg>
      <Icon name={row.closed ? 'folder' : 'folderOpen'} />
      {row.text}
    </li>
  );

const navButton = 'h-[22px] w-full shrink-0 border border-[#a0a0a0] border-t-white border-l-white bg-[#f0f0f0] text-center';

const Navigator = () => (
  <aside className="flex w-[213px] shrink-0 flex-col font-['Noto_Sans_CJK_SC',sans-serif]">
    <div className="flex h-[15px] shrink-0 items-center bg-[#0054e3] text-white">
      <h2>模块导航栏</h2>
      <svg viewBox="0 0 30 12" className="ml-auto mr-1 h-3 w-[30px]" aria-hidden="true">
        <path d="M3 2h5M4 2v4M7 2v4M2 6.500h7M5.500 7v4" stroke="#fff" fill="none" />
        <path d="M20 2l7 8M27 2l-7 8" stroke="#fff" />
      </svg>
    </div>
    <button type="button" className={`mt-0.5 ${navButton}`}>工程设置</button>
    <button type="button" className={navButton}>绘图输入</button>
    <div className="flex h-7 shrink-0 items-center bg-linear-to-b from-white to-[#f0f0f0] pl-1.5">
      <svg viewBox="0 0 42 18" className="h-[18px] w-[42px]" aria-hidden="true">
        <path d="M1 6h9M5.500 2v8M8 12h9M12.500 8v8M24 5h9M31 12h9" stroke="#000" strokeWidth="3.500" />
        <path d="M2 6h7M5.500 3v6M9 12h7M12.500 9v6M25 5h7M32 12h7" stroke="#18a090" strokeWidth="1.500" />
      </svg>
    </div>
    <div className="ml-0.5 mr-0.5 flex min-h-0 flex-1 border border-[#828790] bg-white">
      <ul className="min-w-0 flex-1 overflow-hidden">
        {TREE.map((row, i) => (
          <TreeItem key={i} row={row} />
        ))}
      </ul>
      <div className="flex w-[15px] flex-col items-center bg-[#f0f0f0]">
        <svg viewBox="0 0 10 10" className="my-[5px] h-2.5 w-2.5 shrink-0"><path d="M1 7l4-4 4 4" fill="none" stroke="#505050" strokeWidth="2" /></svg>
        <span className="mt-[25px] h-[211px] w-full bg-[#cdcdcd]" />
        <svg viewBox="0 0 10 10" className="mb-1 mt-auto h-2.5 w-2.5 shrink-0"><path d="M1 3l4 4 4-4" fill="none" stroke="#505050" strokeWidth="2" /></svg>
      </div>
    </div>
    <button type="button" className={`mt-0.5 ${navButton}`}>单构件输入</button>
    <button type="button" className={navButton}>报表预览</button>
  </aside>
);

const BUBBLES: [number, number, string, string][] = [
  [230, 190, 'B', '#909090'],
  [230, 238, '0', '#a090a8'],
  [230, 376, 'A1', '#a070b0'],
  [285.5, 181, '8', '#d8d8d8'],
  [419, 181, '2', '#d8d8d8'],
  [552, 181, '3', '#d8d8d8'],
  [685, 181, '4', '#c050c0'],
  [951.5, 181, '5', '#c050c0'],
  [1085, 181, '6', '#e8e8e8'],
  [1156, 190, 'B', '#e0e0e0'],
  [1156, 238, '0', '#e0e0e0'],
  [1156, 376, 'A1', '#b050b0'],
  [1218, 181, '7', '#c050c0'],
  [1350.5, 181, '8', '#c050c0'],
];

const DIMS: [number, number, string, string][] = [
  [250, 222, '200', '#d8d8d8'],
  [250, 323, '3400', '#d8d8d8'],
  [250, 360, '900', '#b8b8b8'],
  [250, 378, '600', '#a8a8a8'],
  [250, 390, '8000', '#a0a0a0'],
  [250, 397, '8500', '#c0c0c0'],
  [1315, 230, '1200', '#b8b8b8'],
  [1315, 270, '900', '#b8b8b8'],
  [1315, 323, '3400', '#c8c8c8'],
  [1315, 395, '00000', '#c0c0c0'],
  [1315, 412, '6500', '#a8a8a8'],
  [1315, 424, '6500', '#c0c0c0'],
  [1315, 449, '50', '#d0d0d0'],
];

const RED_X = [285.5, 370.5, 419.5, 431.5, 479.5, 540.5, 552.5, 600.5, 660.5, 757.5, 830.5, 963.5, 1011.5, 1084.5, 1088.5, 1092.5, 1096.5, 1117.5];

// plan view; drawing units are screen pixels with the origin at the window corner
const Drawing = () => (
  <svg className="block h-full w-full" role="img" aria-label="梁平面图">
    <defs>
      <pattern id="hatch" width="16" height="16" patternUnits="userSpaceOnUse" x="420" y="190">
        <path d="M0 16L16 0" stroke="#d0d0d0" />
      </pattern>
    </defs>
    <g transform="translate(-217 -168)" fill="none" shapeRendering="crispEdges">
      <rect x="418.500" y="189.500" width="133" height="50" fill="url(#hatch)" stroke="#fff" />
      <rect x="1224" y="168" width="121" height="203" fill="url(#hatch)" />
      {/* beams */}
      <g fill="#00f000">
        <rect x="480" y="372" width="124" height="7" />
        <rect x="596" y="328" width="9" height="44" />
        <rect x="681" y="168" width="8" height="202" />
        <rect x="947" y="168" width="8" height="202" />
        <rect x="758" y="373" width="186" height="6" />
        <rect x="959" y="370" width="251" height="12" />
        <rect x="1212" y="168" width="12" height="202" />
        <rect x="1345" y="168" width="12" height="202" />
        <rect x="1226" y="233" width="118" height="12" />
      </g>
      <rect x="286" y="372" width="146" height="7" fill="#00009c" />
      <rect x="1226" y="372" width="118" height="7" fill="#00009c" />
      <rect x="690" y="372" width="68" height="7" fill="#0078ff" />
      {/* columns */}
      <g fill="#8000ff">
        <rect x="677" y="368" width="16" height="16" />
        <rect x="943" y="368" width="16" height="16" />
        <rect x="1210" y="231" width="16" height="16" />
        <rect x="1343" y="231" width="16" height="16" />
        <rect x="1209" y="368" width="17" height="16" />
        <rect x="1343" y="368" width="16" height="16" />
        <path d="M1074 309h37v41h-23v3h-9v-3h-5z" />
      </g>
      {/* axis lines */}
      <g stroke="#ff0000">
        {RED_X.map(x => (
          <path key={x} d={`M${x} 168v207`} />
        ))}
        <path d="M605 168v204" strokeWidth="2" />
        <path d="M685.500 168v216M951.500 168v216M1221.500 168v203M1302.500 168v203M1353.500 168v203" />
        <path d="M285 190.500h883M285 238.500h883M285 327.500h1065M285 347.500h1065M285 371.500h1065M285 375.500h924M217 387.500h1133M285 390.500h1065" />
        <path d="M217 226.500h69M217 363.500h69M217 408.500h69M217 412.500h69" />
        <path d="M1351 275.500h14M1351 414.500h14M1351 416.500h14M1351 440.500h14M1351 442.500h14M1351 238.500h14M1351 190.500h14" />
        <path d="M285 380h1065" strokeWidth="2" />
        <path d="M757.500 238A119 119 0 01951.500 238" />
        <circle cx="1303" cy="327.500" r="129.500" />
        <path d="M309 402l9 10M318 402l-9 10" />
      </g>
      <g stroke="#008000">
        <path d="M225.500 168v212M604.500 382v58M685.500 384v67M951.500 384v67M1173.500 324v64M1229.500 168v207M1290.500 168v207" />
        <path d="M217 190.500h68M217 238.500h68M217 327.500h68M217 347.500h68M217 371.500h68M217 375.500h68M217 390.500h68" />
        <path d="M1168 190.500h182M1168 238.500h182M1169 275.500h182M1169 414.500h182M1169 416.500h182M1169 440.500h182M1169 442.500h182M1209 371.500h142" />
        <path d="M217 380h68" strokeWidth="2" />
        <path d="M951 238l34 50M238 320l16 16M238 340l16 16M238 363l16 16M238 383l16 16M245.500 327v70" />
        <path d="M1282 181l17 17M1282 230l17 17M1302 230l17 17M1302 267l17 17M1282 368l17 17M1222 368l17 17M1302 364l17 17M1302 405l17 22M1302 433l17 18M1310.500 238v38M1310.500 370v75" />
        {BUBBLES.map(([x, y], i) => (
          <circle key={i} cx={x} cy={y} r="12.700" />
        ))}
      </g>
      <g stroke="#fff">
        <path d="M1218.500 168v208.500h133V168" />
        <path d="M1284 168v152M1240 277l44 44 44-43" strokeWidth="2" />
        <path d="M715 349v24" strokeWidth="2" />
        <path d="M693.500 359.500h43v8h-43z" stroke="#909090" />
      </g>
      <path d="M685 366l8 12h-16z" fill="#ffff00" />
      <path d="M677 371.500h16M677 375.500h16M685.500 366v12" stroke="#ff0000" />
      <path d="M272 423v-38" stroke="#00ff00" strokeWidth="4" />
      <path d="M268 385l4-11 4 11z" fill="#00ff00" />
      <path d="M281 377l4.500 4 4.500-4M285.500 381v5" stroke="#00ff00" />
      <path d="M272 423h38" stroke="#ff0000" strokeWidth="4" />
      <path d="M309 418.500l12 4.500-12 4.500z" fill="#ff0000" />
    </g>
    <g transform="translate(-217 -168)" fontSize="14" className="font-['Liberation_Mono',monospace]">
      {BUBBLES.map(([x, y, text, fill], i) => (
        <text key={i} x={x} y={y + 5} textAnchor="middle" fontSize={text.length > 1 ? 12 : 16} fontWeight="700" fill={fill}>{text}</text>
      ))}
      {DIMS.map(([x, y, text, fill], i) => (
        <text key={i} transform={`translate(${x} ${y}) rotate(-90)`} fill={fill}>{text}</text>
      ))}
      <g fill="#e0e0e0">
        <text x="714" y="347">KL-1a 240*500</text>
        <text x="715" y="364">B12@100/A8@200(2) 2C16;3C18</text>
        <text x="686" y="398">200*600</text>
      </g>
    </g>
  </svg>
);

const SnapTools = () => (
  <div className="flex h-[29px] shrink-0 gap-0.5 pt-px">
    <Bar className="pr-1">
      <Grip />
      <Tool icon="ortho" label="正交" />
      <span className="ml-[3px] flex">
        <ActiveTool icon="osnap" label="对象捕捉" />
      </span>
      <Tool icon="dynInput" label="动态输入" />
    </Bar>
    <Bar className="pr-1">
      <Grip />
      <Tool icon="cross" label="交点" />
      <span className="ml-[3px] flex">
        <ActiveTool icon="perp" label="垂点" />
        <ActiveTool icon="mid" label="中点" />
      </span>
      <Tool icon="vertex" label="顶点" />
      <Tool icon="coord" label="坐标" />
    </Bar>
    <Bar className="pr-1">
      <Grip />
      <Combo label="偏移方式" value="不偏移" width="w-[57px]" />
      <Sep />
      <span className="ml-0.5 text-[13px] text-[#8a8a8a]">X=</span>
      <Spin label="X偏移" value="0" width="w-[58px]" />
      <span className="text-[#8a8a8a]">mm</span>
      <span className="ml-1 text-[13px] text-[#8a8a8a]">Y=</span>
      <Spin label="Y偏移" value="0" width="w-[58px]" />
      <span className="text-[#8a8a8a]">mm</span>
      <Sep />
      <label className="ml-0.5 flex items-center gap-2">
        <input type="checkbox" className="h-[11px] w-[11px] appearance-none border border-[#a0a0a0] bg-[#f4f4f4]" />
        旋转
      </label>
      <span className="ml-0.5 flex">
        <Spin label="旋转角度" value="0.000" width="w-[68px]" />
      </span>
      <span className="text-[#777]">°</span>
    </Bar>
  </div>
);

const COLS = ['w-[31px]', 'w-[41px]', 'w-[61px]', 'w-[61px]', 'w-[41px]', 'w-[41px]', 'w-[41px]', 'w-[41px]', 'w-[41px]', 'w-[124px]', 'w-[81px]', 'w-[81px]', 'w-[81px]', 'w-[81px]', 'w-[81px]', 'w-[81px]', 'w-[81px]', 'w-[81px]'];
const SUB_HEADS = ['A1', 'A2', 'A3', 'A4', '跨长', '截面(B*H)', '距左边线距离'];
const BAR_HEADS = ['左支座钢筋', '跨中钢筋', '右支座钢筋', '下通长筋', '下部钢筋', '侧面通长筋'];

// count, steel grade mark, diameter
const Rebar = ({ count, size }: { count: string; size: string }) => (
  <span className="flex items-center">
    {count}
    <svg viewBox="0 0 12 12" className="mx-px h-3 w-3" role="img" aria-label="三级钢">
      <path d="M5 1v10M7.500 1v10M2 10.500h9" stroke="#000" fill="none" />
      <ellipse cx="6" cy="6" rx="4" ry="2.500" fill="none" stroke="#000" />
    </svg>
    {size}
  </span>
);

const CELLS: React.ReactNode[] = [
  '1', '23.35', '23.35', '', '', '(200)', '(200)', '(1800)', '200*600', '(100)',
  <Rebar key="top" count="2" size="16" />, '', '', '',
  <Rebar key="bottom" count="3" size="18" />, '', '',
];

const thClass = 'h-[19px] overflow-hidden whitespace-nowrap border-b border-r border-[#b8b8b8] bg-linear-to-b from-white to-[#f0f0f0] p-0 text-center font-normal';

const SpanTable = () => (
  <section className="flex h-[199px] shrink-0">
    <div className="flex w-3 shrink-0 flex-col items-center">
      <button type="button" aria-label="关闭面板" className="h-[11px] w-[11px] border border-[#6a3030] bg-[#e8d8d8]">
        <svg viewBox="0 0 9 9" className="h-[9px] w-[9px]"><path d="M1 1l7 7M8 1L1 8" stroke="#401818" strokeWidth="1.500" /></svg>
      </button>
      <svg className="mt-0.5 w-2 flex-1" aria-hidden="true">
        <path d="M1.500 0v200M5.500 0v200" stroke="#b8b8b8" strokeWidth="2" strokeDasharray="2 3" />
      </svg>
    </div>
    <div className="flex min-w-0 flex-1 flex-col border-b border-[#a0a0a0]">
      <div className="flex h-[27px] shrink-0 items-center gap-0.5 bg-linear-to-b from-[#fdfdfd] to-[#f0f0f0]">
        <Tool icon="docs" label="复制跨数据" />
        <Tool icon="paste" label="粘贴跨数据" disabled />
        <Tool label="输入当前列数据" />
        <Tool label="删除当前列数据" />
        <Tool label="页面设置" />
        <Tool label="调换起始跨" />
        <Tool label="悬臂钢筋代号" />
      </div>
      <div className="min-h-0 flex-1 overflow-hidden border-x border-t border-[#a0a0a0] bg-white">
        <table className="w-[1171px] table-fixed border-separate border-spacing-0 font-['Noto_Sans_CJK_SC',sans-serif]">
          <colgroup>
            {COLS.map((c, i) => (
              <col key={i} className={c} />
            ))}
          </colgroup>
          <thead>
            <tr>
              <th rowSpan={2} className={thClass} aria-label="行号" />
              <th rowSpan={2} className={thClass}>跨号</th>
              <th colSpan={2} className={thClass}>标高(m)</th>
              <th colSpan={7} className={thClass}>构件尺寸(mm)</th>
              <th rowSpan={2} className={thClass}>上通长筋</th>
              <th colSpan={3} className={thClass}>上部钢筋</th>
              <th colSpan={2} className={thClass}>下部钢筋</th>
              <th className={thClass} />
            </tr>
            <tr>
              <th className={thClass}>起点标高</th>
              <th className="h-[19px] border-b border-r border-[#b8b8b8] bg-linear-to-b from-[#fbd698] to-[#f0bd62] p-0 text-center font-normal text-[#6a0a50]">终点标高</th>
              {SUB_HEADS.map(h => (
                <th key={h} className={thClass}>{h}</th>
              ))}
              {BAR_HEADS.map(h => (
                <th key={h} className={thClass}>{h}</th>
              ))}
            </tr>
          </thead>
          <tbody>
            <tr className="bg-[#a6caf0]">
              <th className="h-[19px] border-b border-r border-[#b8b8b8] bg-[#ffd48a] p-0 text-center font-normal text-[#6a0a50]">1</th>
              {CELLS.map((c, i) => (
                <td key={i} className={`relative h-[19px] whitespace-nowrap border-b border-r border-[#b8c4d0] p-0 pl-0.5 ${i === 0 ? 'border-r-black' : ''}`}>
                  {c}
                  {i === 2 && (
                    <span className="absolute -inset-x-0.5 -inset-y-px border-[3px] border-black">
                      <span className="absolute -bottom-1 -right-1 h-1.5 w-1.5 border border-white bg-black" />
                    </span>
                  )}
                </td>
              ))}
            </tr>
          </tbody>
        </table>
      </div>
      <div className="flex h-[17px] shrink-0 items-center justify-between border-x border-[#a0a0a0] bg-[#f0f0f0] px-1">
        <svg viewBox="0 0 8 8" className="h-2 w-2"><path d="M6 0L2 4l4 4" fill="none" stroke="#505050" strokeWidth="1.500" /></svg>
        <span className="ml-1.5 h-[15px] w-[489px] bg-[#cdcdcd]" />
        <svg viewBox="0 0 8 8" className="ml-auto h-2 w-2"><path d="M2 0l4 4-4 4" fill="none" stroke="#505050" strokeWidth="1.500" /></svg>
      </div>
    </div>
    <span className="w-0.5 shrink-0" />
  </section>
);

const statusCell = 'flex h-[19px] items-center whitespace-nowrap border border-[#d8d8d8] px-px';

const StatusBar = () => (
  <footer className="flex h-[23px] shrink-0 items-center gap-[3px] bg-[#f4f4f4] font-['Noto_Sans_CJK_SC',sans-serif]">
    <span className={`w-[147px] ${statusCell}`}>X=79424 Y=-8506</span>
    <span className={`w-[77px] ${statusCell}`}>层高:2.8m</span>
    <span className={`w-[97px] ${statusCell}`}>底标高:20.35m</span>
    <span className={`w-[48px] ${statusCell}`}>1(56)</span>
    <span className={`min-w-0 flex-1 ${statusCell}`}>按鼠标左键选择梁图元,按右键或ESC退出;可以通过回车键及shift+"→←↑"光标键在跨之间、上下输入框之间进行切换</span>
    <span className={`w-[70px] ${statusCell}`}>60 FPS</span>
  </footer>
);

const TASK_ICONS: { name: string; tone?: string; art: React.ReactNode }[] = [
  {
    name: '任务视图',
    art: <path d="M7 5h10v14H7zM5 7H3v10h2M19 7h2v10h-2" fill="none" stroke="#fff" strokeWidth="1.300" />,
  },
  {
    name: '风车',
    art: (
      <g fill="#f0f0f0">
        <path d="M11.500 11.500C2 13 0 2 8 2c5 0 4 5 3.500 9.500zM12.500 11.500C11 2 22 0 22 8c0 5-5 4-9.500 3.500zM12.500 12.500C22 11 24 22 16 22c-5 0-4-5-3.500-9.500zM11.500 12.500C13 22 2 24 2 16c0-5 5-4 9.500-3.500z" />
      </g>
    ),
  },
  {
    name: '浏览器',
    art: (
      <>
        <path d="M20 14H8c0 6 7 7 10 3h3C18 25 3 23 4 12S22 2 20 14zM8 11h9c-1-5-8-5-9 0z" fill="#f0f0f0" fillRule="evenodd" />
        <path d="M3 20C-1 13 14 1 21 3" stroke="#f0f0f0" strokeWidth="1.500" fill="none" />
      </>
    ),
  },
  {
    name: '旋风',
    art: (
      <path d="M19 6C13 1 4 4 4 12s9 11 14 6c2-3 1-7-2-7s-5 3-3 5M14 11c-3-4-7 0-5 4M20 3c-6 1-10 4-11 8" fill="none" stroke="#d8d8d8" strokeWidth="1.300" />
    ),
  },
  {
    name: 'Edge',
    art: <path d="M2 11C3 0 22-1 22 12v2H9c0 6 7 6 11 3v4C10 26 1 19 7 11c-2 0-4 2-5 4zM9 10h7c0-5-7-5-7 0z" fill="#0a78d8" fillRule="evenodd" />,
  },
  {
    name: 'IE',
    art: (
      <>
        <path d="M21 13H8c0 6 7 7 11 3h2c-3 8-17 7-17-4S21 1 21 13zM8 10h9c-1-5-8-5-9 0z" fill="#58bdf0" fillRule="evenodd" />
        <path d="M3 22C-2 14 14-1 22 3 15 3 4 13 3 22z" fill="#f4c030" />
      </>
    ),
  },
  {
    name: '文件资源管理器',
    art: (
      <>
        <path d="M2 4h7l2 2h11v15H2z" fill="#f7d26c" />
        <path d="M2 9h20v12H2z" fill="#fde59a" />
        <path d="M6 14h12v7h-3v-4H9v4H6z" fill="#3b9ede" />
      </>
    ),
  },
  {
    name: '加速器',
    tone: 'border-[#76b9ed]',
    art: (
      <>
        <path d="M20 4C12-1 2 5 3 13s10 12 17 7c3-3 3-7 2-9h-9c-1 3 2 4 4 3-2 4-8 3-8-2s6-8 11-8z" fill="#1e9ff0" />
        <path d="M5 8c3-6 10-7 15-4-6 0-11 2-13 7z" fill="#7fd0ff" />
      </>
    ),
  },
  {
    name: '绿色浏览器',
    tone: 'border-[#76b9ed]',
    art: (
      <>
        <circle cx="12" cy="12" r="10.500" fill="#5cc02c" />
        <path d="M18 13H9c0 4 5 4 8 2v3C11 21 5 18 5 12S18 3 18 13zM9 11h5c0-3-5-3-5 0z" fill="#fff" fillRule="evenodd" />
      </>
    ),
  },
  {
    name: 'GGJ2013',
    tone: 'bg-[#3b484c] border-[#76b9ed]',
    art: (
      <>
        <rect x="1" y="1" width="22" height="22" rx="4" fill="#0d90e8" />
        <path d="M14 5h-3v9M5 12c0 9 14 9 14 0M7 9.500h10" fill="none" stroke="#fff" strokeWidth="2" />
      </>
    ),
  },
];

const TaskBar = () => (
  <div className="flex h-10 shrink-0 items-center bg-[#04100f] text-white">
    <button type="button" aria-label="开始" className="flex h-full w-12 items-center justify-center bg-black">
      <svg viewBox="0 0 16 16" className="h-4 w-4"><path d="M0 2.500L7 1.500v6H0zM8 1.400L16 0v7.500H8zM0 8.500h7v6l-7-1zM8 8.500h8V16l-8-1.400z" fill="#fff" /></svg>
    </button>
    <label className="flex h-full w-[344px] items-center bg-[#333] px-2">
      <svg viewBox="0 0 22 22" className="h-[22px] w-[22px] shrink-0" aria-hidden="true"><circle cx="11" cy="11" r="9" fill="none" stroke="#f4f4f4" strokeWidth="2.600" /></svg>
      <input aria-label="搜索" placeholder="在这里输入你要搜索的内容" className="ml-1.5 min-w-0 flex-1 bg-transparent text-sm outline-none placeholder:text-[#a0a0a0]" />
      <svg viewBox="0 0 16 18" className="mr-1 h-[18px] w-4" aria-hidden="true">
        <path d="M6 2h4v9H6zM3 8v3q0 3 5 3t5-3V8M8 14v3M5 17h6" fill="none" stroke="#a8a8a8" />
      </svg>
    </label>
    <div className="flex h-full">
      {TASK_ICONS.map(t => (
        <button type="button" key={t.name} aria-label={t.name} className={`mr-0.5 flex h-full w-12 items-center justify-center border-b-2 ${t.tone ?? 'border-transparent'}`}>
          <svg viewBox="0 0 24 24" className="h-6 w-6">{t.art}</svg>
        </button>
      ))}
    </div>
    <div className="ml-auto flex h-full items-center">
      <span className="mr-5">链接</span>
      <p className="mr-5 text-center leading-[17px]">28%<br />CPU使用</p>
      <svg viewBox="0 0 120 18" className="h-[18px] w-[120px]" aria-hidden="true">
        <g fill="none" stroke="#fff" strokeWidth="1.300">
          <path d="M2 12l5-5 5 5" />
          <path d="M28 6h11v8H28zM25 4v6M28 4v6M24 7h5v4h-3v3" />
          <path d="M52 16a12 12 0 0112-12M55 16a9 9 0 019-8M58 16a6 6 0 016-4M61 16a3 3 0 013-1" />
          <path d="M72 7h3l4-4v12l-4-4h-3zM82 6q2 3 0 6M84 4q4 5 0 10" />
          <path d="M97.500 3.500h21v11h-21zM100 7h16M100 9.500h16M103 12h10" />
        </g>
      </svg>
      <span className="ml-2.5">中</span>
      <svg viewBox="0 0 16 16" className="ml-3.5 h-4 w-4" aria-hidden="true">
        <rect width="16" height="16" rx="3" fill="#f0501e" />
        <path d="M12 4c-4-1-8 0-7 2s6 1 6 4-5 2-7 1" fill="none" stroke="#fff" strokeWidth="2" />
      </svg>
      <p className="ml-4 w-[62px] text-center leading-[17px]">10:10<br />2018/7/18</p>
      <div className="relative ml-4 mr-5 h-6 w-6">
        <svg viewBox="0 0 24 24" className="h-6 w-6" aria-hidden="true">
          <path d="M2 3h16v13H9l-3 4v-4H2z" fill="#fff" />
          <path d="M5 7h10M5 10h10M5 13h7" stroke="#111" />
        </svg>
        <span className="absolute left-3 top-2.5 flex h-4 w-4 items-center justify-center rounded-full border border-[#888] bg-[#333] text-[11px]">1</span>
      </div>
    </div>
  </div>
);

export default function App() {
  return (
    <div className="relative flex h-screen flex-col overflow-hidden bg-[#f0f0f0] font-['Open_Sans','Noto_Sans_CJK_SC',sans-serif] text-xs leading-4 text-black">
      <TitleBar />
      <ImeBar />
      <MenuBar />
      <MainTools />
      <div className="flex min-h-0 flex-1">
        <Navigator />
        <main className="ml-1 flex min-w-0 flex-1 flex-col">
          <EditTools />
          <div className="mr-px min-h-0 flex-1 overflow-hidden bg-black">
            <Drawing />
          </div>
          <SnapTools />
          <span className="h-1 shrink-0" />
          <SpanTable />
        </main>
      </div>
      <StatusBar />
      <TaskBar />
      {/* hand-drawn marks */}
      <svg className="pointer-events-none absolute inset-0 h-full w-full" aria-hidden="true">
        <g fill="none" stroke="#ff0000" strokeWidth="7" shapeRendering="crispEdges">
          <ellipse cx="327" cy="577" rx="127.500" ry="50.500" />
          <ellipse cx="660" cy="565.500" rx="88.500" ry="56" />
        </g>
      </svg>
    </div>
  );
}
